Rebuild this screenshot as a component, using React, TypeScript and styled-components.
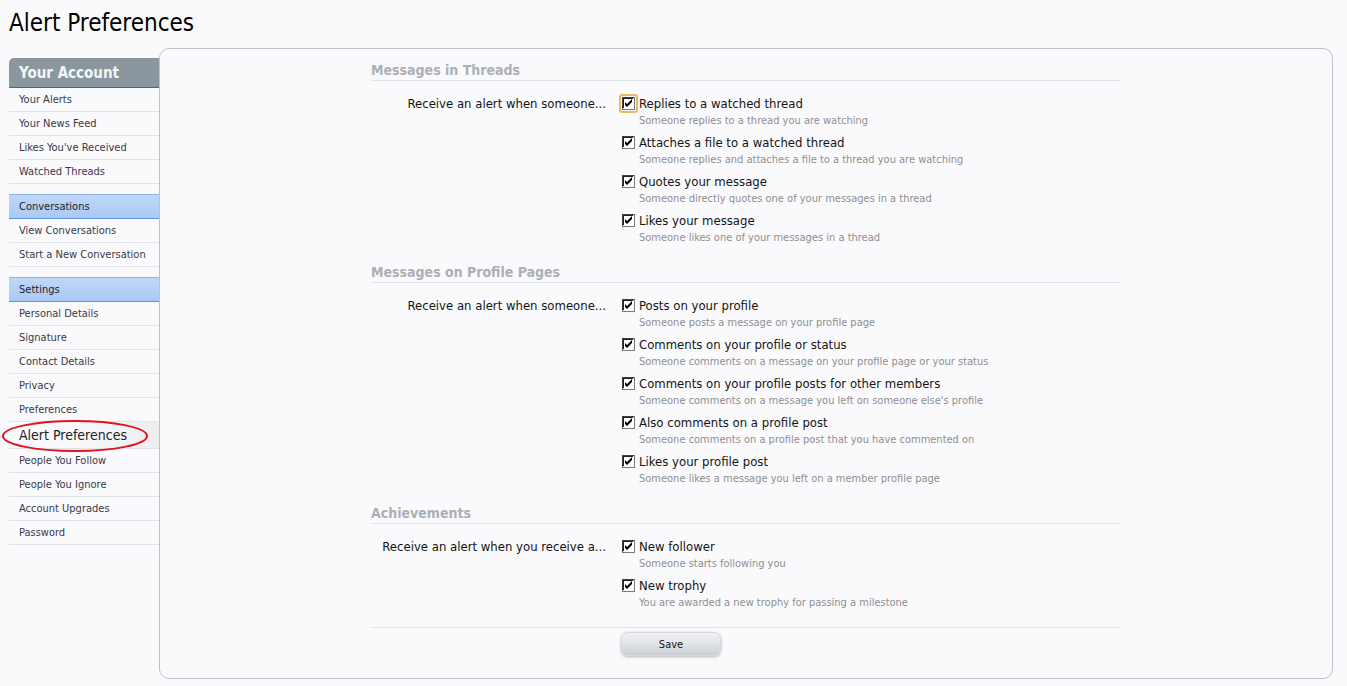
import React from "react";
import styled, { createGlobalStyle } from "styled-components";

const GlobalStyle = createGlobalStyle`
  html, body {
    margin: 0;
    padding: 0;
    background: #fafafc;
  }
  body {
    font-family: "DejaVu Sans Condensed", "DejaVu Sans", sans-serif;
    font-stretch: condensed;
    color: #141414;
  }
  * { box-sizing: border-box; }
`;

const Page = styled.div`
  padding: 0 14px 0 9px;
  width: 1347px;
  height: 686px;
`;

const Title = styled.h1`
  margin: 0;
  height: 48px;
  line-height: 46px;
  font-size: 24px;
  font-weight: normal;
  color: #000;
`;

const Body = styled.div`
  display: flex;
  align-items: flex-start;
`;

const Sidebar = styled.nav`
  width: 150px;
  flex: 0 0 150px;
  margin-top: 10px;
  position: relative;
`;

const MainHeader = styled.div`
  height: 30px;
  line-height: 30px;
  padding-left: 10px;
  background: #8b979e;
  border-bottom: 1px solid #59646b;
  border-radius: 5px 0 0 0;
  color: #f3f7fa;
  font-weight: bold;
  font-size: 15px;
`;

const GroupHeader = styled.div`
  margin-top: 10px;
  height: 25px;
  line-height: 24px;
  padding-left: 10px;
  background: linear-gradient(#c0d7f7, #a9c9f4);
  border-top: 1px solid #8db2ec;
  border-bottom: 1px solid #5e94e4;
  font-size: 11px;
  color: #1c1c24;
`;

const Item = styled.div<{ $active?: boolean }>`
  height: ${(p) => (p.$active ? 27 : 24)}px;
  padding-top: 1px;
  line-height: ${(p) => (p.$active ? 25 : 22)}px;
  padding-left: 10px;
  border-bottom: 1px solid #e1e4e8;
  font-size: ${(p) => (p.$active ? 14 : 11)}px;
  color: ${(p) => (p.$active ? "#1e2328" : "#3a3848")};
  background: ${(p) =>
    p.$active ? "linear-gradient(90deg, #fafafc 40%, #eceef0)" : "transparent"};
  white-space: nowrap;
`;

const Ring = styled.svg`
  position: absolute;
  left: -8px;
  top: 361px;
  pointer-events: none;
`;

const Panel = styled.main`
  flex: 1;
  height: 631px;
  border: 1px solid #bcc3c8;
  border-radius: 10px;
  background: #fafafc;
  padding-top: 12px;
`;

const Form = styled.form`
  width: 750px;
  margin: 0 auto;
`;

const Section = styled.section`
  & + & {
    margin-top: 11px;
  }
`;

const SectionTitle = styled.h3`
  margin: 0;
  font-size: 14px;
  line-height: 18px;
  font-weight: bold;
  color: #aab0b5;
  padding-bottom: 1px;
  border-bottom: 1px solid #dfe3e6;
`;

const Unit = styled.div`
  display: grid;
  grid-template-columns: 250px 1fr;
  margin-top: 15px;
`;

const UnitLabel = styled.div`
  text-align: right;
  padding-right: 15px;
  font-size: 13px;
  line-height: 16px;
  color: #141414;
`;

const Options = styled.ul`
  list-style: none;
  margin: 0;
  padding: 0;
`;

const Option = styled.li`
  position: relative;
  padding-left: 18px;
  margin-bottom: 7px;
`;

const OptionLabel = styled.div`
  font-size: 13px;
  line-height: 16px;
  color: #141414;
`;

const Hint = styled.div`
  margin-top: 2px;
  font-size: 11px;
  line-height: 14px;
  color: #8f8f93;
`;

const BoxWrap = styled.span<{ $focus?: boolean }>`
  position: absolute;
  left: 1px;
  top: 1px;
  width: 13px;
  height: 13px;
  display: block;
  ${(p) =>
    p.$focus
      ? `&::before {
          content: "";
          position: absolute;
          left: -3px; top: -3px; right: -3px; bottom: -3px;
          border: 2px solid #e8b968;
          border-radius: 3px;
        }`
      : ""}
`;

const Submit = styled.div`
  margin-top: 10px;
  border-top: 1px solid #dfe3e6;
  display: grid;
  grid-template-columns: 250px 1fr;
  padding-top: 4px;
`;

const SaveButton = styled.button`
  grid-column: 2;
  width: 100px;
  height: 24px;
  border: 1px solid #d4d8dc;
  border-radius: 7px;
  background: linear-gradient(#f2f3f5, #dfe2e5 55%, #cacdd1);
  box-shadow: 0 1px 3px rgba(0, 0, 0, 0.28);
  font-family: inherit;
  font-stretch: condensed;
  font-size: 11px;
  color: #141414;
  padding: 0;
`;

function Check({ focus }: { focus?: boolean }) {
  return (
    <BoxWrap $focus={focus}>
      <svg width="13" height="13" viewBox="0 0 13 13" style={{ display: "block", position: "relative" }}>
        <rect x="0" y="0" width="13" height="13" fill="#7a7a7a" />
        <rect x="0" y="0" width="12" height="1" fill="#404040" />
        <rect x="0" y="0" width="1" height="12" fill="#404040" />
        <rect x="1" y="1" width="11" height="11" fill="#fff" />
        <rect x="1" y="1" width="10" height="1" fill="#222" />
        <rect x="1" y="1" width="1" height="10" fill="#222" />
        <path d="M3 5 L3 8 L5 10 L10 5 L10 2 L5 7 Z" fill="#000" />
      </svg>
    </BoxWrap>
  );
}

type Opt = { label: string; hint: string };

const sections: { title: string; prompt: string; opts: Opt[] }[] = [
  {
    title: "Messages in Threads",
    prompt: "Receive an alert when someone...",
    opts: [
      { label: "Replies to a watched thread", hint: "Someone replies to a thread you are watching" },
      { label: "Attaches a file to a watched thread", hint: "Someone replies and attaches a file to a thread you are watching" },
      { label: "Quotes your message", hint: "Someone directly quotes one of your messages in a thread" },
      { label: "Likes your message", hint: "Someone likes one of your messages in a thread" },
    ],
  },
  {
    title: "Messages on Profile Pages",
    prompt: "Receive an alert when someone...",
    opts: [
      { label: "Posts on your profile", hint: "Someone posts a message on your profile page" },
      { label: "Comments on your profile or status", hint: "Someone comments on a message on your profile page or your status" },
      { label: "Comments on your profile posts for other members", hint: "Someone comments on a message you left on someone else's profile" },
      { label: "Also comments on a profile post", hint: "Someone comments on a profile post that you have commented on" },
      { label: "Likes your profile post", hint: "Someone likes a message you left on a member profile page" },
    ],
  },
  {
    title: "Achievements",
    prompt: "Receive an alert when you receive a...",
    opts: [
      { label: "New follower", hint: "Someone starts following you" },
      { label: "New trophy", hint: "You are awarded a new trophy for passing a milestone" },
    ],
  },
];

export default function App() {
  return (
    <>
      <GlobalStyle />
      <Page>
        <Title>Alert Preferences</Title>
        <Body>
          <Sidebar>
            <MainHeader>Your Account</MainHeader>
            <Item>Your Alerts</Item>
            <Item>Your News Feed</Item>
            <Item>Likes You've Received</Item>
            <Item>Watched Threads</Item>
            <GroupHeader>Conversations</GroupHeader>
            <Item>View Conversations</Item>
            <Item>Start a New Conversation</Item>
            <GroupHeader>Settings</GroupHeader>
            <Item>Personal Details</Item>
            <Item>Signature</Item>
            <Item>Contact Details</Item>
            <Item>Privacy</Item>
            <Item>Preferences</Item>
            <Item $active>Alert Preferences</Item>
            <Item>People You Follow</Item>
            <Item>People You Ignore</Item>
            <Item>Account Upgrades</Item>
            <Item>Password</Item>
            <Ring width="150" height="34" viewBox="0 0 150 34">
              <ellipse cx="74" cy="17" rx="72" ry="15" fill="none" stroke="#e4121c" strokeWidth="2" />
            </Ring>
          </Sidebar>
          <Panel>
            <Form onSubmit={(e) => e.preventDefault()}>
              {sections.map((s, si) => (
                <Section key={s.title}>
                  <SectionTitle>{s.title}</SectionTitle>
                  <Unit>
                    <UnitLabel>{s.prompt}</UnitLabel>
                    <Options>
                      {s.opts.map((o, oi) => (
                        <Option key={o.label}>
                          <Check focus={si === 0 && oi === 0} />
                          <OptionLabel>{o.label}</OptionLabel>
                          <Hint>{o.hint}</Hint>
                        </Option>
                      ))}
                    </Options>
                  </Unit>
                </Section>
              ))}
              <Submit>
                <SaveButton type="submit">Save</SaveButton>
              </Submit>
            </Form>
          </Panel>
        </Body>
      </Page>
    </>
  );
}
